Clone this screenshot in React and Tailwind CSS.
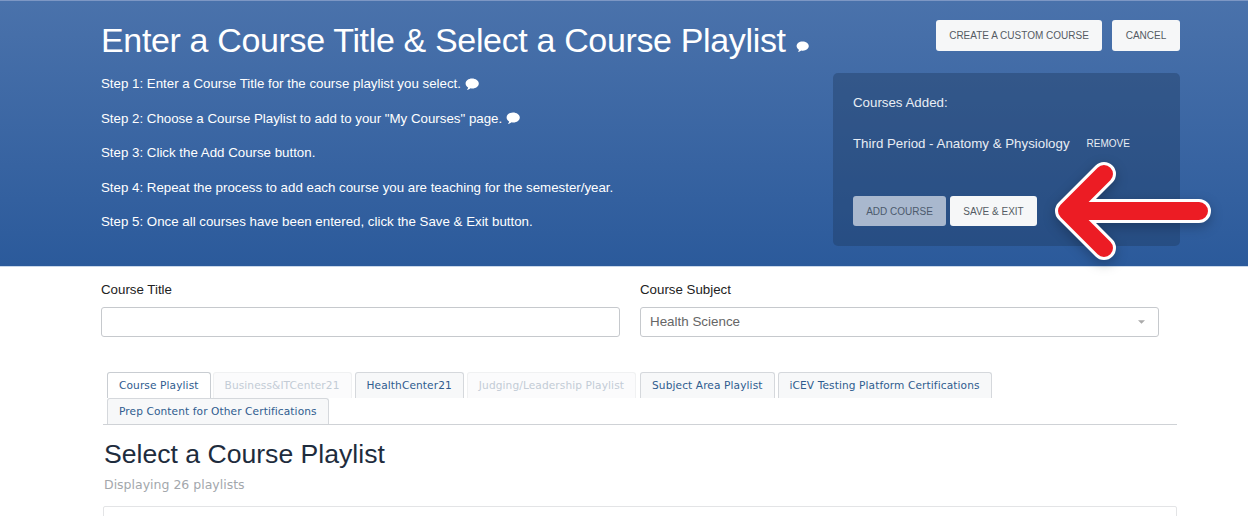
const sans = "font-['Liberation_Sans',Arial,sans-serif]";
const tabFont = "font-['DejaVu_Sans',Verdana,sans-serif]";

function Bubble({ className }) {
    return (
        <svg viewBox="0 0 14 13" className={className} fill="white">
            <path d="M7 0.5C3.4 0.5 0.6 2.7 0.6 5.5c0 1.7 1 3.1 2.6 4-.2.9-.7 1.8-1.3 2.5 1.4-.2 2.8-.9 3.7-1.7.6.1 1.2.2 1.8.2 3.6 0 6.4-2.2 6.4-5S10.6.5 7 .5z" />
        </svg>
    );
}

function Tab({ label, active, disabled, className = "" }) {
    let color = "bg-[#f7f8f9] border-[#d5d8dc] text-[#2f5c8f]";
    if (active) color = "bg-white border-[#c9cdd2] text-[#2f5c8f]";
    if (disabled) color = "bg-[#fbfbfc] border-[#f0f1f2] text-[#c3ccd6]";
    return (
        <div className={`h-[26px] px-[11px] flex items-center border border-b-0 rounded-t-[3px] text-[10.6px] tracking-[0.1px] whitespace-nowrap ${color} ${className}`}>
            {label}
        </div>
    );
}

export default function App() {
    const steps = [
        { text: "Step 1: Enter a Course Title for the course playlist you select.", bubble: true },
        { text: 'Step 2: Choose a Course Playlist to add to your "My Courses" page.', bubble: true },
        { text: "Step 3: Click the Add Course button." },
        { text: "Step 4: Repeat the process to add each course you are teaching for the semester/year." },
        { text: "Step 5: Once all courses have been entered, click the Save & Exit button." },
    ];

    return (
        <div className={`relative w-[1248px] h-[516px] overflow-hidden bg-white ${sans}`}>
            <div className="h-[267px] pl-[101px] pr-[68px] flex justify-between bg-gradient-to-b from-[#4a72ab] to-[#2b5a9b] border-t border-b border-t-[#7d97c4] border-b-[#c9d8ea]">
                <div className="text-white">
                    <div className="mt-[19px] flex items-end text-[34px] tracking-[-0.35px] leading-[40px] whitespace-nowrap">
                        Enter a Course Title &amp; Select a Course Playlist
                        <Bubble className="w-[13px] h-[12px] ml-[10px] mb-[7px]" />
                    </div>
                    <div className="mt-[15px] flex flex-col gap-[16px] text-[13.3px] leading-[18.5px]">
                        {steps.map((step) => (
                            <div key={step.text} className="flex items-center gap-[4px] whitespace-nowrap">
                                {step.text}
                                {step.bubble && <Bubble className="w-[14px] h-[13px]" />}
                            </div>
                        ))}
                    </div>
                </div>
                <div className="w-[347px] flex flex-col">
                    <div className="mt-[19px] flex justify-end gap-[10px]">
                        <div className="h-[31px] w-[166px] flex items-center justify-center bg-[#f6f7f8] rounded-[3px] text-[10px] text-[#555b63]">CREATE A CUSTOM COURSE</div>
                        <div className="h-[31px] w-[68px] flex items-center justify-center bg-[#f6f7f8] rounded-[3px] text-[10px] text-[#555b63]">CANCEL</div>
                    </div>
                    <div className="mt-[22px] h-[173px] px-[20px] pt-[21px] bg-[#1e3a60]/40 rounded-[5px] text-white text-[13.3px]">
                        <div className="leading-[18px] text-[#e8edf4]">Courses Added:</div>
                        <div className="mt-[23px] flex items-center leading-[18px] text-[#e8edf4] whitespace-nowrap">
                            Third Period - Anatomy &amp; Physiology
                            <span className="ml-[17px] text-[10px]">REMOVE</span>
                        </div>
                        <div className="mt-[43px] flex gap-[4px] text-[10px]">
                            <div className="h-[30px] w-[93px] flex items-center justify-center bg-[#a9b8ce] rounded-[3px] text-[#4c5a6d]">ADD COURSE</div>
                            <div className="h-[30px] w-[87px] flex items-center justify-center bg-[#f6f7f8] rounded-[3px] text-[#555b63]">SAVE &amp; EXIT</div>
                        </div>
                    </div>
                </div>
            </div>

            <div className="pl-[101px] pt-[15px] flex gap-[20px]">
                <div className="w-[519px]">
                    <div className="text-[13.3px] leading-[16px] text-[#222]">Course Title</div>
                    <div className="mt-[9px] h-[30px] border border-[#c6c9cd] rounded-[3px] bg-white"></div>
                </div>
                <div className="w-[519px]">
                    <div className="text-[13.3px] leading-[16px] text-[#222]">Course Subject</div>
                    <div className="mt-[9px] h-[30px] pl-[9px] pr-[13px] flex items-center justify-between border border-[#c6c9cd] rounded-[3px] bg-white text-[13.4px] text-[#666]">
                        Health Science
                        <svg viewBox="0 0 8 4" className="w-[7px] h-[4px]" fill="#aaa"><path d="M0 0h8L4 4z" /></svg>
                    </div>
                </div>
            </div>

            <div className={`ml-[103px] w-[1074px] mt-[35px] ${tabFont}`}>
                <div className="pl-[4px] border-b border-[#cfd2d6]">
                    <div className="flex gap-[3px]">
                        <Tab label="Course Playlist" active />
                        <Tab label="Business&ITCenter21" disabled className="-ml-[1px]" />
                        <Tab label="HealthCenter21" />
                        <Tab label="Judging/Leadership Playlist" disabled />
                        <Tab label="Subject Area Playlist" className="ml-[1px]" />
                        <Tab label="iCEV Testing Platform Certifications" />
                    </div>
                    <div className="flex">
                        <Tab label="Prep Content for Other Certifications" />
                    </div>
                </div>
                <div className={`mt-[13px] ml-[1px] text-[26.6px] leading-[32px] text-[#1e2c3d] ${sans}`}>Select a Course Playlist</div>
                <div className="mt-[7px] ml-[1px] text-[12.5px] leading-[16px] text-[#a3a7ac]">Displaying 26 playlists</div>
                <div className="mt-[13px] h-[40px] border border-[#e3e4e6] rounded-[2px]"></div>
            </div>

            <svg className="absolute left-[1040px] top-[150px] w-[190px] h-[125px] drop-shadow-[0_4px_6px_rgba(0,0,0,0.25)]" viewBox="0 0 190 125" fill="none">
                <path d="M64 24 L27 61 L64 98 M27 61 H159" stroke="white" strokeWidth="24" strokeLinecap="round" strokeLinejoin="round" />
                <path d="M64 24 L27 61 L64 98 M27 61 H159" stroke="#ec1c24" strokeWidth="18" strokeLinecap="round" strokeLinejoin="round" />
            </svg>
        </div>
    );
}
